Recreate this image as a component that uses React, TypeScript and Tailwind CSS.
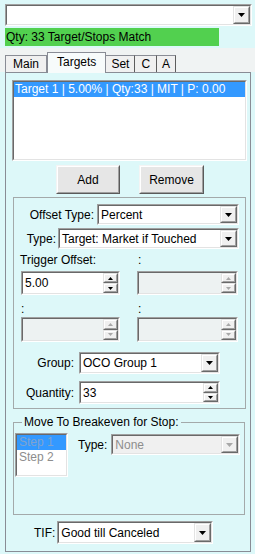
import React from 'react';

const font = { fontFamily: '"Liberation Sans", Arial, sans-serif' };

function Arrow({ disabled = false, up = false, small = false }: { disabled?: boolean; up?: boolean; small?: boolean }) {
  const w = small ? 5 : 7;
  const h = small ? 3 : 4;
  const pts = up ? `0,${h} ${w},${h} ${w / 2},0` : `0,0 ${w},0 ${w / 2},${h}`;
  return (
    <svg width={w} height={h} viewBox={`0 0 ${w} ${h}`}>
      <polygon points={pts} fill={disabled ? '#a8a8a8' : '#000'} />
    </svg>
  );
}

function Sunken({ className = '', children }: { className?: string; children?: React.ReactNode }) {
  return (
    <div className={`border border-t-[#a0a0a0] border-l-[#a0a0a0] border-r-white border-b-white ${className}`}>
      <div className="h-full w-full border border-t-[#696969] border-l-[#696969] border-r-[#e3e3e3] border-b-[#e3e3e3] flex">
        {children}
      </div>
    </div>
  );
}

function Raised({ className = '', children }: { className?: string; children?: React.ReactNode }) {
  return (
    <div className={`border border-t-[#e3e3e3] border-l-[#e3e3e3] border-r-[#696969] border-b-[#696969] ${className}`}>
      <div className="h-full w-full border border-t-white border-l-white border-r-[#a0a0a0] border-b-[#a0a0a0] bg-[#f0f0f0] flex items-center justify-center">
        {children}
      </div>
    </div>
  );
}

function Combo({ value, className = '', disabled = false }: { value: string; className?: string; disabled?: boolean }) {
  return (
    <Sunken className={className}>
      <div className={`flex-1 flex items-center pl-[2px] text-[12px] leading-none ${disabled ? 'bg-[#f0f0f0] text-[#8d8d8d]' : 'bg-white text-black'}`}>
        {value}
      </div>
      <Raised className="w-[17px] h-full">
        <Arrow disabled={disabled} />
      </Raised>
    </Sunken>
  );
}

function Spin({ value = '', className = '', disabled = false }: { value?: string; className?: string; disabled?: boolean }) {
  return (
    <Sunken className={className}>
      <div className={`flex-1 flex items-center pl-[2px] text-[12px] leading-none ${disabled ? 'bg-[#edf2f2]' : 'bg-white text-black'}`}>
        {value}
      </div>
      <div className={`w-[15px] flex flex-col ${disabled ? 'bg-[#edf2f2]' : 'bg-white'}`}>
        <Raised className="flex-1">
          <Arrow up small disabled={disabled} />
        </Raised>
        <Raised className="flex-1">
          <Arrow small disabled={disabled} />
        </Raised>
      </div>
    </Sunken>
  );
}

function Button({ label, className = '' }: { label: string; className?: string }) {
  return (
    <div className={`border border-t-[#f4f4f4] border-l-[#f4f4f4] border-r-[#5a5a5a] border-b-[#5a5a5a] ${className}`}>
      <div className="h-full w-full border border-t-white border-l-white border-r-[#a0a0a0] border-b-[#a0a0a0] bg-[#e6e6e6] flex items-center justify-center text-[12px] text-black">
        {label}
      </div>
    </div>
  );
}

export default function App() {
  return (
    <div className="w-[255px] h-[554px] bg-[#ddf8f9] overflow-hidden text-black" style={font}>
      <div className="pt-[4px] pl-[5px]">
        <Combo value="" className="w-[247px] h-[22px]" />
        <div className="mt-[2px] w-[214px] h-[18px] bg-[#52d04f] flex items-center pl-[1px] text-[12px]">
          Qty: 33 Target/Stops Match
        </div>
      </div>

      <div className="mt-[2px] h-[24px] bg-[#f0f3f3] flex items-end pl-[5px]">
        <div className="h-[17px] px-[7px] border border-b-0 border-[#898c95] bg-[#f0f0f0] text-[12px] leading-[16px]">Main</div>
        <div className="relative z-10 -mb-px h-[21px] px-[9px] border border-b-0 border-[#898c95] bg-[#f7fbfb] text-[12px] leading-[18px]">Targets</div>
        <div className="h-[17px] px-[5px] border border-b-0 border-l-0 border-[#898c95] border-r-[#5d5d5d] bg-[#f0f0f0] text-[12px] leading-[16px]">Set</div>
        <div className="h-[17px] px-[6px] border border-b-0 border-l-0 border-[#898c95] border-r-[#5d5d5d] bg-[#f0f0f0] text-[12px] leading-[16px]">C</div>
        <div className="h-[17px] px-[5px] border border-b-0 border-l-0 border-[#898c95] border-r-[#5d5d5d] bg-[#f0f0f0] text-[12px] leading-[16px]">A</div>
      </div>

      <div className="ml-[5px] w-[246px] h-[480px] border border-[#898c95] bg-[#ddf8f9]">
        <Sunken className="ml-[6px] mt-[7px] w-[235px] h-[81px]">
          <div className="flex-1 bg-white">
            <div className="h-[15px] bg-[#3399ff] text-white text-[12px] leading-[15px] pl-[1px]">
              Target 1 | 5.00% | Qty:33 | MIT | P: 0.00
            </div>
          </div>
        </Sunken>

        <div className="mt-[4px] flex">
          <Button label="Add" className="ml-[50px] w-[64px] h-[29px]" />
          <Button label="Remove" className="ml-[19px] w-[65px] h-[29px]" />
        </div>

        <div className="ml-[7px] mt-[3px] w-[233px] h-[212px] border border-[#a3a9aa] text-[12px]">
          <div className="mt-[6px] pr-[6px] flex justify-end items-center gap-[3px]">
            <span>Offset Type:</span>
            <Combo value="Percent" className="w-[142px] h-[21px]" />
          </div>
          <div className="mt-[3px] pr-[6px] flex justify-end items-center gap-[2px]">
            <span>Type:</span>
            <Combo value="Target: Market if Touched" className="w-[181px] h-[21px]" />
          </div>
          <div className="mt-[4px] flex h-[14px] leading-[14px]">
            <span className="ml-[6px] w-[118px]">Trigger Offset:</span>
            <span>:</span>
          </div>
          <div className="mt-[4px] flex gap-[17px] pl-[7px]">
            <Spin value="5.00" className="w-[99px] h-[24px]" />
            <Spin disabled className="w-[101px] h-[24px]" />
          </div>
          <div className="mt-[8px] flex h-[12px] leading-[12px]">
            <span className="ml-[7px] w-[117px]">:</span>
            <span>:</span>
          </div>
          <div className="mt-[2px] flex gap-[17px] pl-[7px]">
            <Spin disabled className="w-[99px] h-[25px]" />
            <Spin disabled className="w-[101px] h-[25px]" />
          </div>
          <div className="mt-[10px] pr-[25px] flex justify-end items-center gap-[5px]">
            <span>Group:</span>
            <Combo value="OCO Group 1" className="w-[141px] h-[22px]" />
          </div>
          <div className="mt-[7px] pr-[25px] flex justify-end items-center gap-[5px]">
            <span>Quantity:</span>
            <Spin value="33" className="w-[141px] h-[23px]" />
          </div>
        </div>

        <div className="relative ml-[7px] mt-[13px] w-[232px] h-[93px] border border-[#a3a9aa] text-[12px]">
          <span className="absolute left-[8px] -top-[8px] px-[2px] bg-[#ddf8f9] leading-[14px]">Move To Breakeven for Stop:</span>
          <div className="flex">
            <Sunken className="ml-[1px] mt-[10px] w-[53px] h-[44px]">
              <div className="flex-1 bg-white leading-[15px]">
                <div className="bg-[#3399ff] text-[#7fa3cf] pl-[2px]">Step 1</div>
                <div className="text-[#8d8d8d] pl-[2px]">Step 2</div>
              </div>
            </Sunken>
            <div className="mt-[11px] ml-[10px] flex items-center gap-[4px] h-[21px]">
              <span>Type:</span>
              <Combo disabled value="None" className="w-[129px] h-[21px]" />
            </div>
          </div>
        </div>

        <div className="mt-[6px] flex items-center gap-[2px] pl-[28px] text-[12px]">
          <span>TIF:</span>
          <Combo value="Good till Canceled" className="w-[156px] h-[23px]" />
        </div>
      </div>
    </div>
  );
}
